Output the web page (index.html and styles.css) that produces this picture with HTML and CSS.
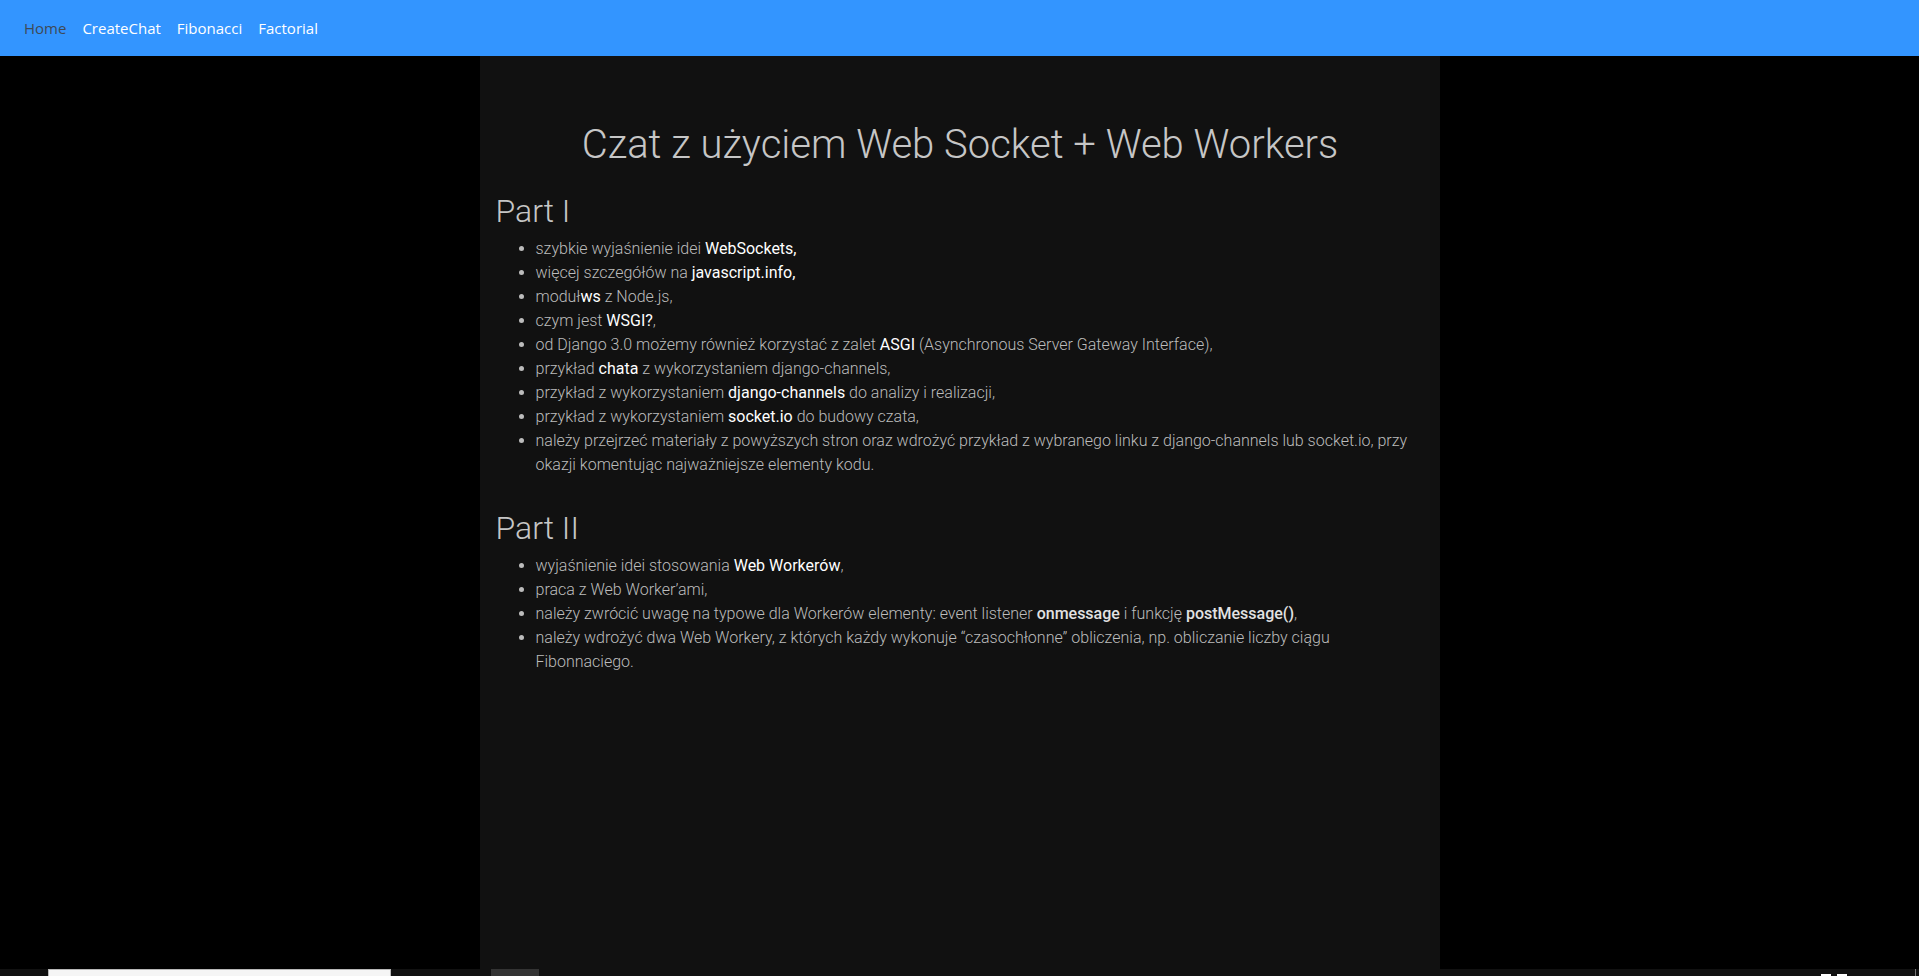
FILE: index.html
```html
<!DOCTYPE html>
<html lang="pl">
<head>
<meta charset="utf-8">
<title>Czat z użyciem Web Socket + Web Workers</title>
<link rel="stylesheet" href="styles.css">
</head>
<body>
<nav class="navbar">
  <a class="nav-link active" href="#">Home</a>
  <a class="nav-link" href="#">CreateChat</a>
  <a class="nav-link" href="#">Fibonacci</a>
  <a class="nav-link" href="#">Factorial</a>
</nav>
<main class="page">
  <div class="container">
    <h1 class="title">Czat z użyciem Web Socket + Web Workers</h1>
    <h2 class="part">Part I</h2>
    <ul class="list">
      <li>szybkie wyjaśnienie idei <a href="#">WebSockets,</a></li>
      <li>więcej szczegółów na <a href="#">javascript.info,</a></li>
      <li>moduł<a href="#">ws</a> z Node.js,</li>
      <li>czym jest <a href="#">WSGI?</a>,</li>
      <li>od Django 3.0 możemy również korzystać z zalet <a href="#">ASGI</a> (Asynchronous Server Gateway Interface),</li>
      <li>przykład <a href="#">chata</a> z wykorzystaniem django-channels,</li>
      <li>przykład z wykorzystaniem <a href="#">django-channels</a> do analizy i realizacji,</li>
      <li>przykład z wykorzystaniem <a href="#">socket.io</a> do budowy czata,</li>
      <li>należy przejrzeć materiały z powyższych stron oraz wdrożyć przykład z wybranego linku z django-channels lub socket.io, przy okazji komentując najważniejsze elementy kodu.</li>
    </ul>
    <h2 class="part part-second">Part II</h2>
    <ul class="list">
      <li>wyjaśnienie idei stosowania <a href="#">Web Workerów</a>,</li>
      <li>praca z Web Worker’ami,</li>
      <li>należy zwrócić uwagę na typowe dla Workerów elementy: event listener <strong>onmessage</strong> i funkcję <strong>postMessage()</strong>,</li>
      <li>należy wdrożyć dwa Web Workery, z których każdy wykonuje “czasochłonne” obliczenia, np. obliczanie liczby ciągu Fibonnaciego.</li>
    </ul>
  </div>
</main>
<footer class="footer">
  <div class="footer-input"></div>
  <div class="footer-button"></div>
  <div class="footer-spacer"></div>
  <div class="footer-marks"><span class="footer-mark"></span><span class="footer-mark"></span></div>
  <div class="footer-line"></div>
</footer>
</body>
</html>
```

FILE: styles.css
```css
html, body {
  margin: 0;
  padding: 0;
  background: #000;
  overflow: hidden;
}

body {
  font-family: Roboto, "Noto Sans", sans-serif;
}

.navbar {
  height: 56px;
  box-sizing: border-box;
  background: #3395ff;
  display: flex;
  align-items: center;
  padding: 0 16px;
}

.nav-link {
  font-family: "Open Sans", "Noto Sans", sans-serif;
  font-size: 15px;
  color: #fff;
  text-decoration: none;
  padding: 0 8px;
  line-height: 20px;
}

.nav-link.active {
  color: #3f4a56;
}

.page {
  display: flex;
  justify-content: center;
  height: 913px;
  background: #000;
}

.container {
  width: 960px;
  box-sizing: border-box;
  padding: 0 15px 0 16px;
  background: #111;
}

.title {
  margin: 65px 0 23px;
  font-weight: 300;
  font-size: 40px;
  line-height: 48px;
  text-align: center;
  color: #c6c6c6;
}

.part {
  margin: 0 0 7px;
  font-weight: 300;
  font-size: 32px;
  line-height: 38px;
  color: #c6c6c6;
}

.part-second {
  margin-top: 32px;
}

.list {
  margin: 0 0 16px;
  padding-left: 40px;
  font-weight: 300;
  font-size: 16px;
  line-height: 24px;
  color: #bcbcbc;
}

.list a {
  color: #fff;
  font-weight: 400;
  text-decoration: none;
}

.list strong {
  color: #e2e2e2;
  font-weight: 500;
}

.footer {
  height: 7px;
  overflow: hidden;
  display: flex;
  background: #111;
}

.footer-input {
  width: 343px;
  height: 12px;
  margin-left: 48px;
  box-sizing: border-box;
  background: #f5f5f5;
  border: 1px solid #b8b8b8;
}

.footer-button {
  width: 48px;
  height: 12px;
  margin-left: 100px;
  background: #333;
}

.footer-spacer {
  flex: 1;
}

.footer-marks {
  display: flex;
  align-items: flex-end;
  gap: 6px;
  width: 26px;
}

.footer-mark {
  width: 10px;
  height: 2px;
  background: #fff;
}

.footer-line {
  width: 1px;
  height: 7px;
  margin-left: 68px;
  margin-right: 3px;
  background: #777;
}
```
